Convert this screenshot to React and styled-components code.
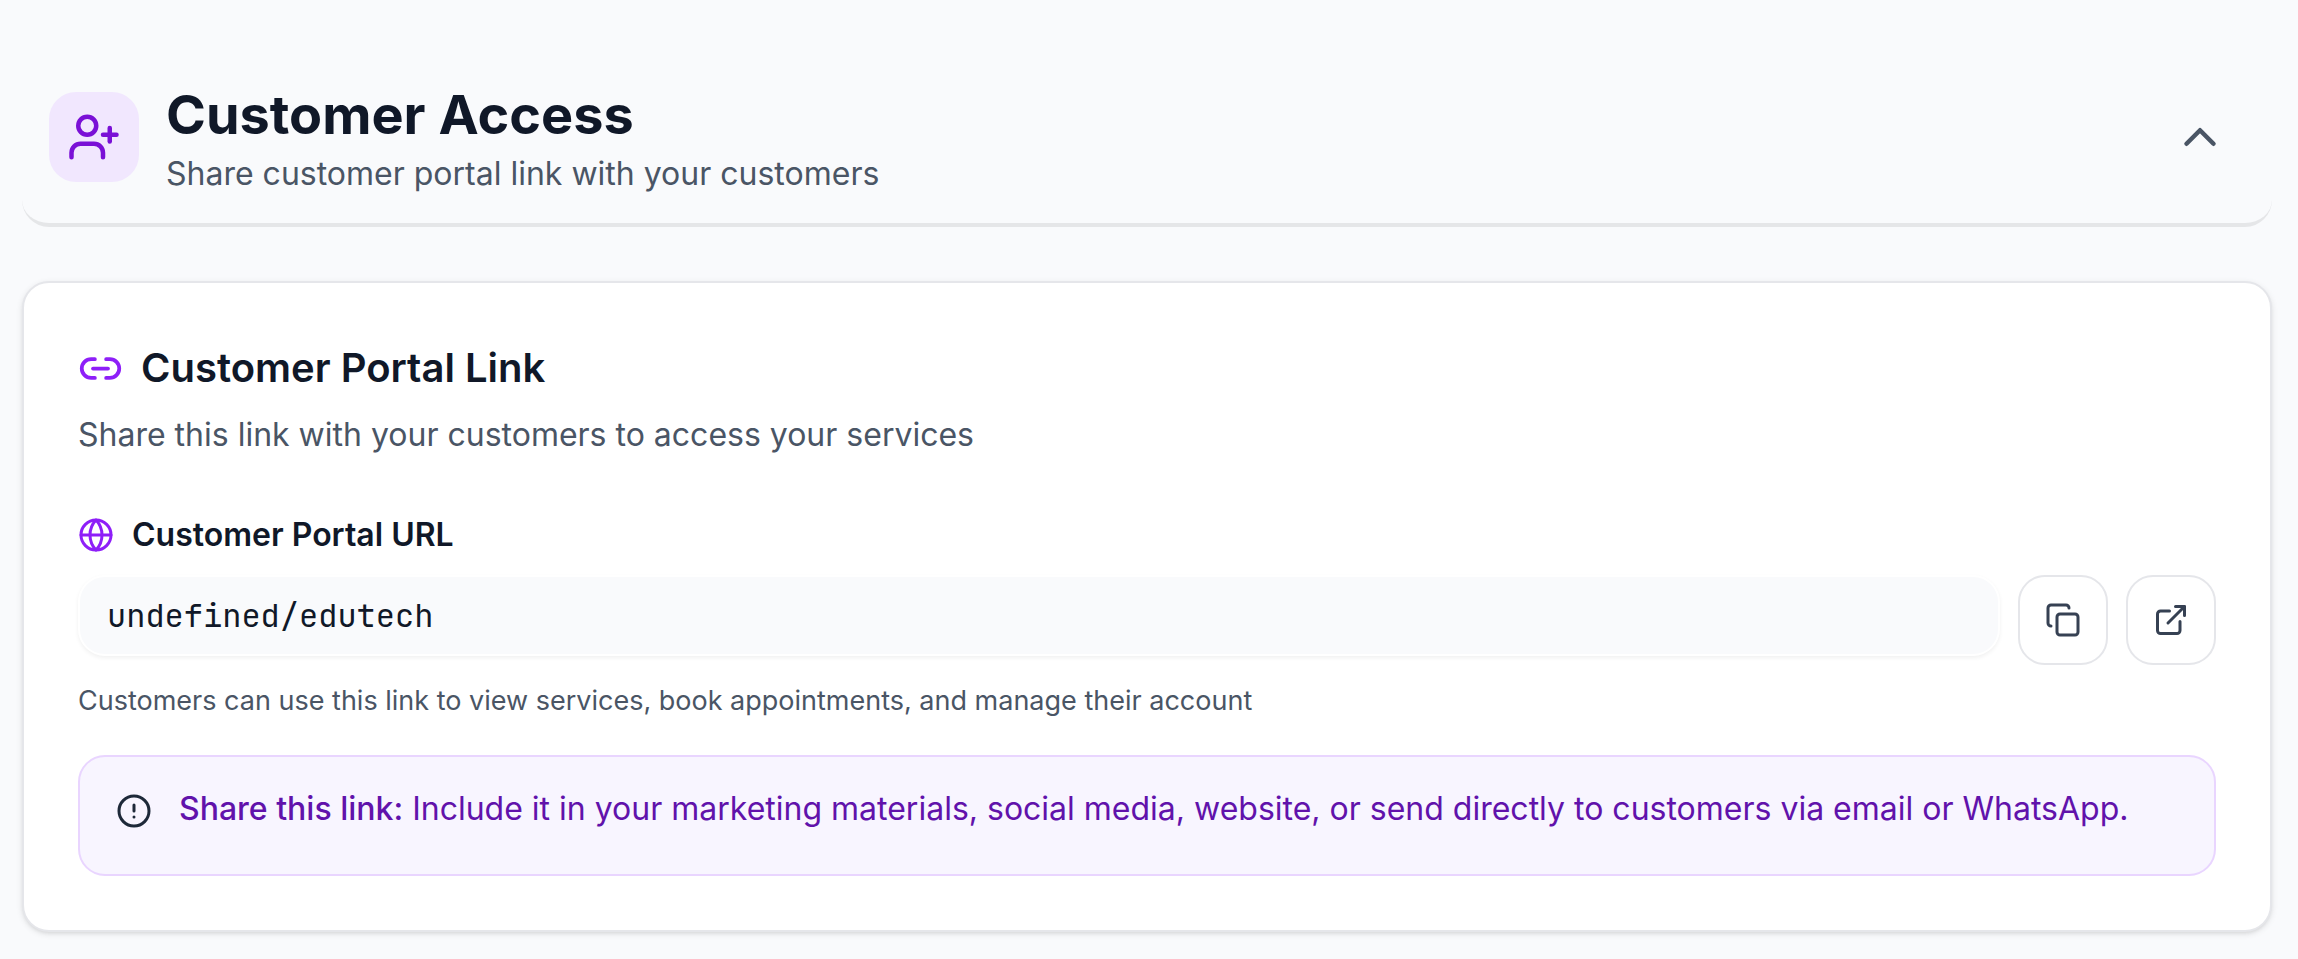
import React, { useState } from 'react';
import styled, { createGlobalStyle } from 'styled-components';
import { UserPlus, ChevronUp, Link2, Globe, Copy, ExternalLink, CircleAlert } from 'lucide-react';

const GlobalStyle = createGlobalStyle`
  *, *::before, *::after { box-sizing: border-box; }
  body {
    margin: 0;
    background: #f9fafc;
    color: #101828;
    font-family: Inter, "Liberation Sans", sans-serif;
  }
  h1, h2, p { margin: 0; }
`;

const Page = styled.main`
  display: flex;
  flex-direction: column;
  gap: 54px;
  padding: 51px 26px 27px 22px;
`;

const Header = styled.header`
  display: flex;
  align-items: center;
  gap: 27px;
  padding: 27px 45px 27px 27px;
  border-bottom: 4px solid #e5e6e8;
  border-radius: 0 0 27px 27px;
`;

const IconTile = styled.div`
  display: flex;
  align-items: center;
  justify-content: center;
  flex: none;
  width: 90px;
  height: 90px;
  border-radius: 27px;
  background: #f1e7fe;
  color: #7a10d6;
`;

const HeaderText = styled.div`
  flex: 1;
  min-width: 0;
`;

const Title = styled.h1`
  font-size: 54px;
  line-height: 74px;
  font-weight: 700;
`;

const Subtitle = styled.p`
  font-size: 32px;
  line-height: 44px;
  color: #4a5565;
`;

const ToggleButton = styled.button`
  display: flex;
  padding: 0;
  border: 0;
  background: none;
  color: #4a5565;
  cursor: pointer;
`;

const Card = styled.section`
  padding: 54px;
  border: 2px solid #e5e6ea;
  border-radius: 27px;
  background: #fff;
  box-shadow: 0 2px 6px rgba(0, 0, 0, 0.1), 0 2px 4px -2px rgba(0, 0, 0, 0.1);
`;

const CardTitle = styled.h2`
  display: flex;
  align-items: center;
  gap: 18px;
  margin-bottom: 14px;
  font-size: 40px;
  line-height: 62px;
  font-weight: 600;

  svg { color: #8e1ff8; }
`;

const Field = styled.div`
  display: flex;
  flex-direction: column;
  gap: 18px;
  margin: 56px 0 36px;
`;

const FieldLabel = styled.label`
  display: flex;
  align-items: center;
  gap: 18px;
  font-size: 32px;
  line-height: 44px;
  font-weight: 600;

  svg { color: #8e1ff8; }
`;

const FieldRow = styled.div`
  display: flex;
  align-items: flex-start;
  gap: 18px;
`;

const UrlInput = styled.input`
  flex: 1;
  min-width: 0;
  height: 81px;
  padding: 0 27px;
  border: 2px solid #fff;
  border-radius: 27px;
  background: #f9fafc;
  box-shadow: 0 2px 4px rgba(0, 0, 0, 0.06);
  color: #101828;
  font-family: "JetBrains Mono", "Liberation Mono", monospace;
  font-size: 32px;
  outline: none;
`;

const IconButton = styled.button`
  display: flex;
  align-items: center;
  justify-content: center;
  flex: none;
  width: 90px;
  height: 90px;
  padding: 0;
  border: 2px solid #e5e6ea;
  border-radius: 27px;
  background: #fff;
  color: #364153;
  cursor: pointer;
`;

const Hint = styled.p`
  font-size: 27px;
  line-height: 36px;
  color: #4a5565;
`;

const Notice = styled.aside`
  display: flex;
  gap: 27px;
  padding: 27px 36px 40px;
  border: 2px solid #e9d5ff;
  border-radius: 27px;
  background: #f8f5ff;
  color: #6112ab;
  font-size: 32px;
  line-height: 50px;

  svg {
    flex: none;
    margin-top: 9px;
    color: #1e2939;
  }
`;

const Strong = styled.strong`
  font-weight: 500;
`;

export default function App() {
  const [open, setOpen] = useState(true);
  const url = 'undefined/edutech';

  return (
    <>
      <GlobalStyle />
      <Page>
        <Header>
          <IconTile><UserPlus size={54} /></IconTile>
          <HeaderText>
            <Title>Customer Access</Title>
            <Subtitle>Share customer portal link with your customers</Subtitle>
          </HeaderText>
          <ToggleButton
            type="button"
            aria-label="Toggle customer access"
            aria-expanded={open}
            onClick={() => setOpen(!open)}
          >
            <ChevronUp size={54} />
          </ToggleButton>
        </Header>
        {open && (
          <Card>
            <CardTitle><Link2 size={45} />Customer Portal Link</CardTitle>
            <Subtitle>Share this link with your customers to access your services</Subtitle>
            <Field>
              <FieldLabel htmlFor="portal-url"><Globe size={36} />Customer Portal URL</FieldLabel>
              <FieldRow>
                <UrlInput id="portal-url" type="text" readOnly value={url} />
                <IconButton type="button" aria-label="Copy link"><Copy size={36} /></IconButton>
                <IconButton type="button" aria-label="Open link"><ExternalLink size={36} /></IconButton>
              </FieldRow>
              <Hint>Customers can use this link to view services, book appointments, and manage their account</Hint>
            </Field>
            <Notice>
              <CircleAlert size={36} />
              <p>
                <Strong>Share this link:</Strong> Include it in your marketing materials, social media, website, or send directly to customers via email or WhatsApp.
              </p>
            </Notice>
          </Card>
        )}
      </Page>
    </>
  );
}
